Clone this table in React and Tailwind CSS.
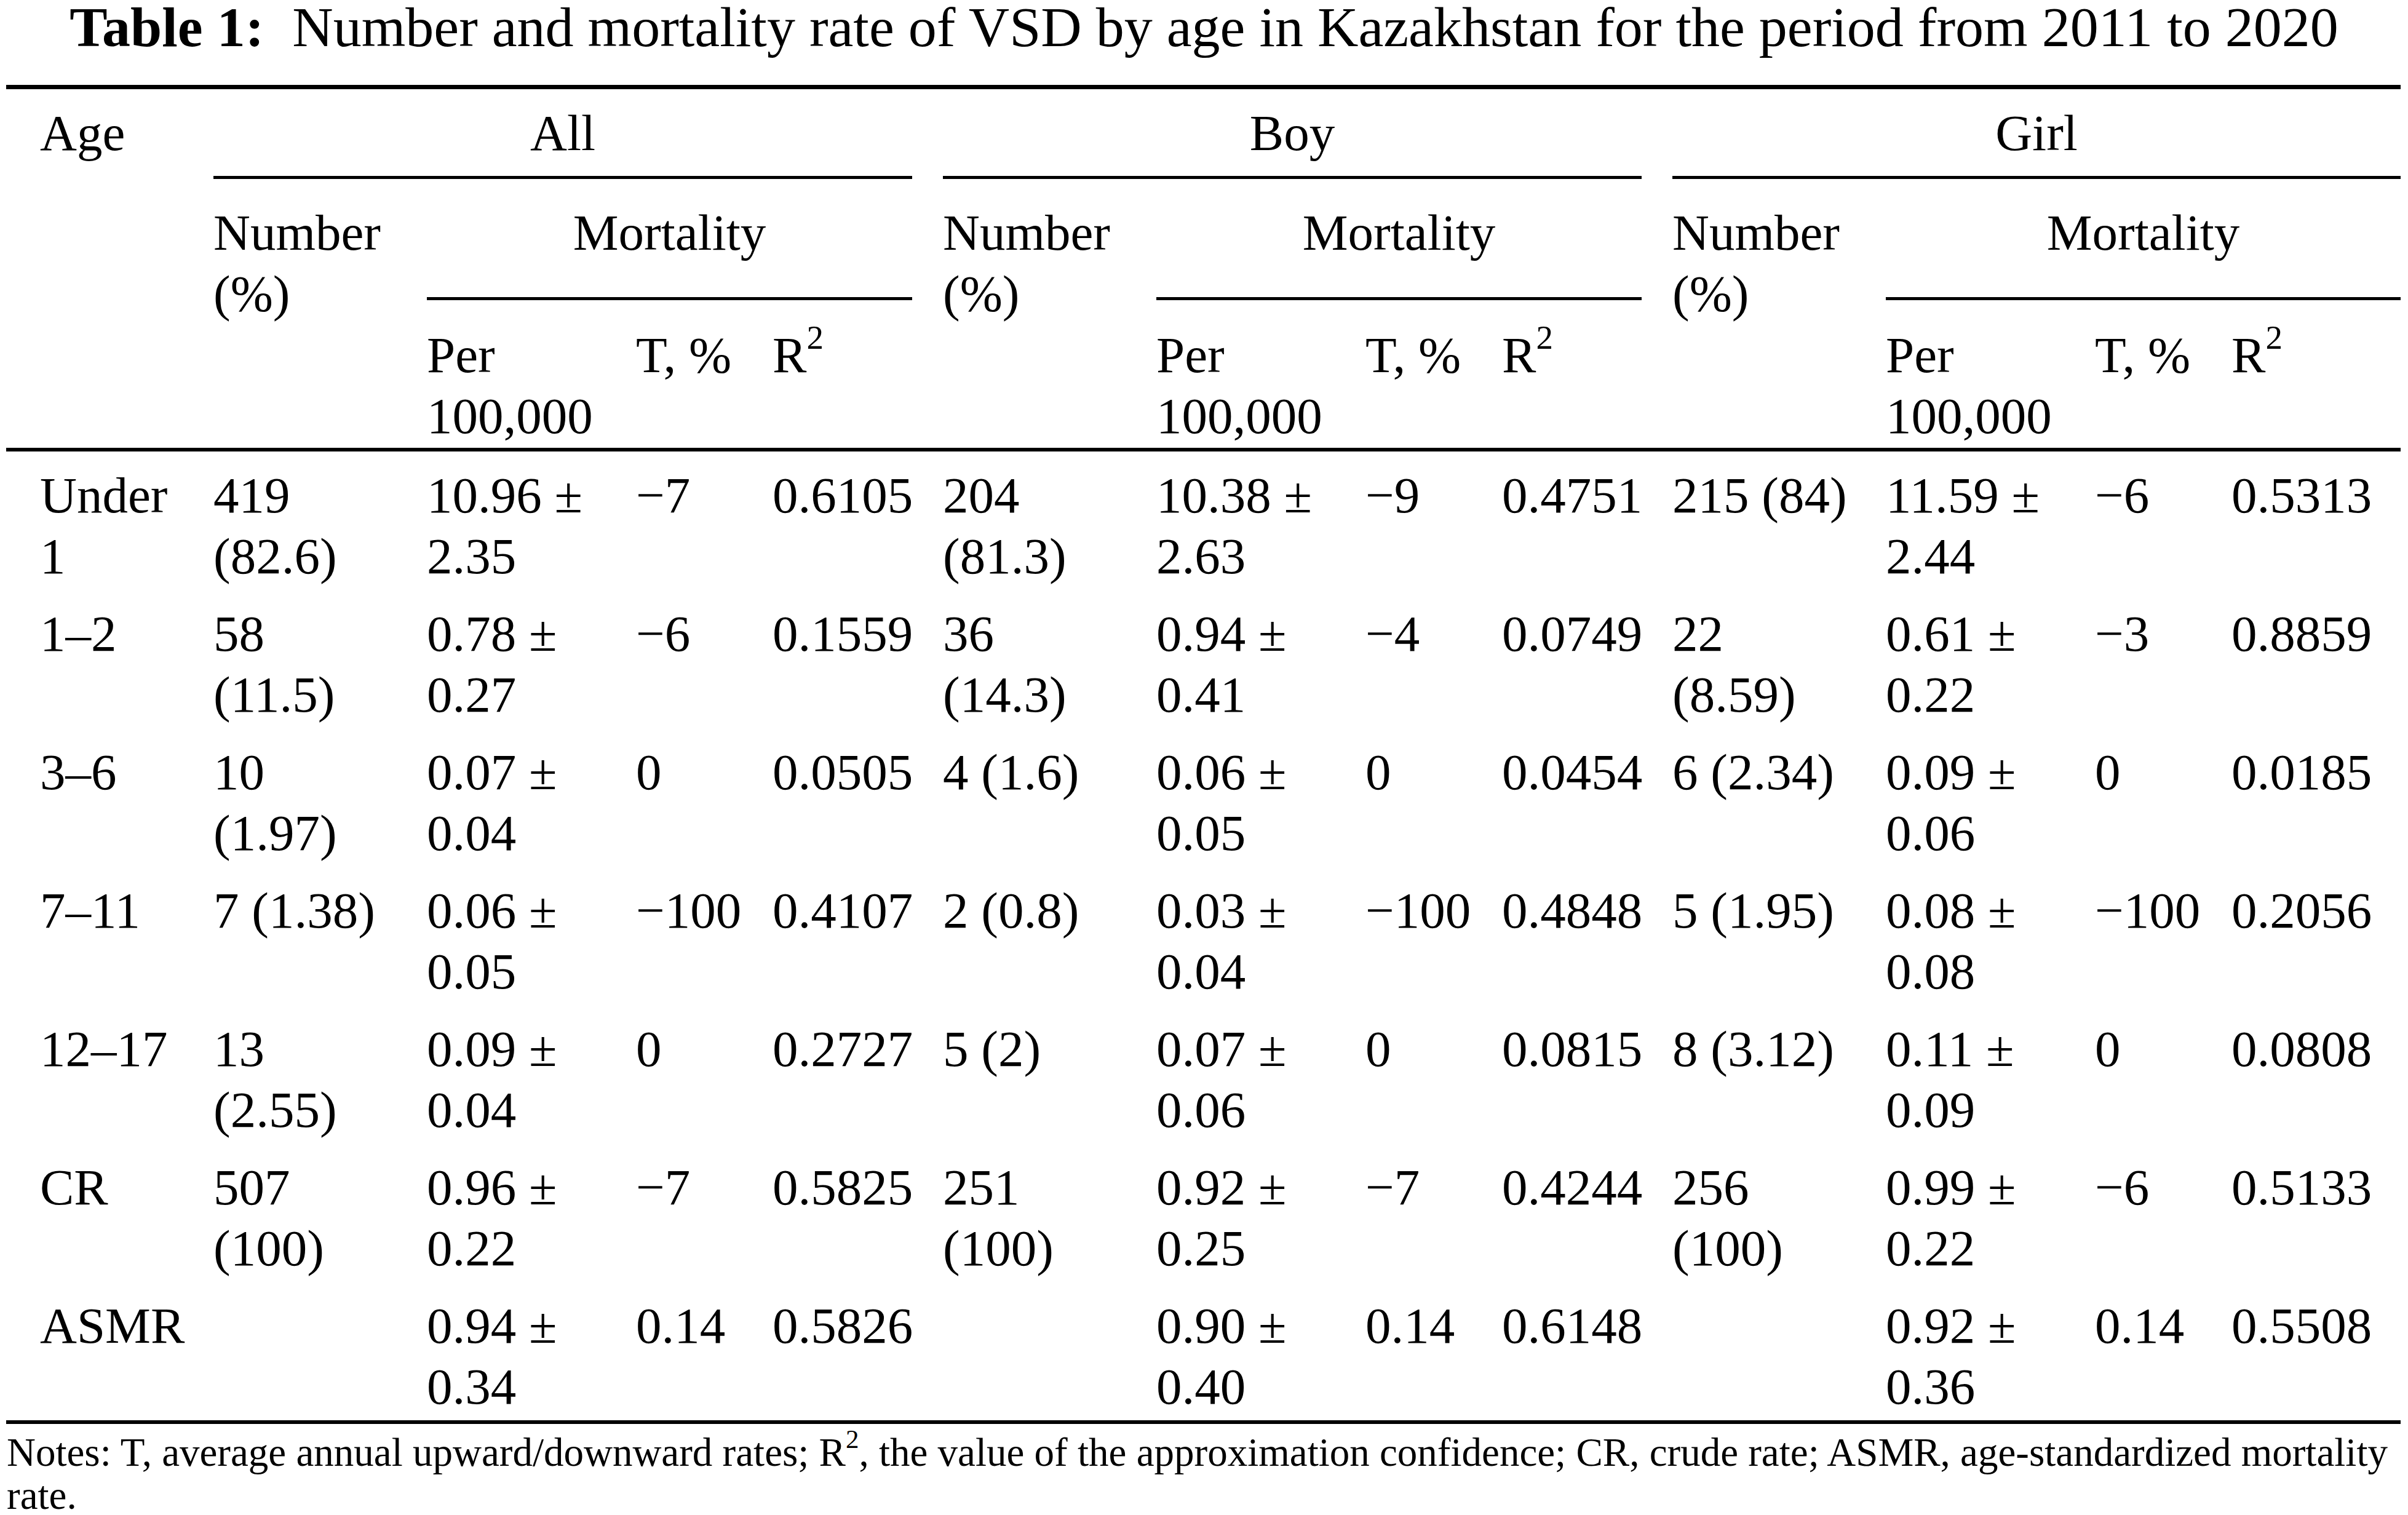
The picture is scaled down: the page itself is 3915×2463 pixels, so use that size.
import React from 'react';

const COLS =
  'grid grid-cols-[337px_347px_340px_222px_277px_347px_340px_222px_277px_347px_340px_222px_275px]';

const ROWS = [
  ['Under\n1', '419\n(82.6)', '10.96 ±\n2.35', '−7', '0.6105', '204\n(81.3)', '10.38 ±\n2.63', '−9', '0.4751', '215 (84)', '11.59 ±\n2.44', '−6', '0.5313'],
  ['1–2', '58\n(11.5)', '0.78 ±\n0.27', '−6', '0.1559', '36\n(14.3)', '0.94 ±\n0.41', '−4', '0.0749', '22\n(8.59)', '0.61 ±\n0.22', '−3', '0.8859'],
  ['3–6', '10\n(1.97)', '0.07 ±\n0.04', '0', '0.0505', '4 (1.6)', '0.06 ±\n0.05', '0', '0.0454', '6 (2.34)', '0.09 ±\n0.06', '0', '0.0185'],
  ['7–11', '7 (1.38)', '0.06 ±\n0.05', '−100', '0.4107', '2 (0.8)', '0.03 ±\n0.04', '−100', '0.4848', '5 (1.95)', '0.08 ±\n0.08', '−100', '0.2056'],
  ['12–17', '13\n(2.55)', '0.09 ±\n0.04', '0', '0.2727', '5 (2)', '0.07 ±\n0.06', '0', '0.0815', '8 (3.12)', '0.11 ±\n0.09', '0', '0.0808'],
  ['CR', '507\n(100)', '0.96 ±\n0.22', '−7', '0.5825', '251\n(100)', '0.92 ±\n0.25', '−7', '0.4244', '256\n(100)', '0.99 ±\n0.22', '−6', '0.5133'],
  ['ASMR', '', '0.94 ±\n0.34', '0.14', '0.5826', '', '0.90 ±\n0.40', '0.14', '0.6148', '', '0.92 ±\n0.36', '0.14', '0.5508'],
];

const GROUPS = ['All', 'Boy', 'Girl'];

const RSquared = () => (
  <span>
    R<span className="relative top-[-38px] text-[55px] leading-none">2</span>
  </span>
);

const App = () => {
  return (
    <div className="w-[3915px] min-h-[2463px] bg-white text-black font-['Liberation_Serif','Times_New_Roman',serif]">
      <div className="h-[138px] text-center text-[92px] leading-[88px] whitespace-nowrap">
        <span className="font-bold">Table 1:</span>
        {'\u2002'}Number and mortality rate of VSD by age in Kazakhstan for the period from 2011 to 2020
      </div>

      <div className="ml-[10px] w-[3893px] text-[83px] leading-[99px]">
        <div className="border-t-[7px] border-b-[6px] border-black">
          {/* header */}
          <div className={`${COLS} grid-rows-[146px_197px_240px]`}>
            <div className="row-span-3 pl-[55px] pt-[22px]">Age</div>
            {GROUPS.map((g, i) => (
              <div
                key={g}
                className={`col-span-4 pt-[22px] text-center border-b-[5px] border-black ${i < 2 ? 'mr-[50px]' : ''}`}
              >
                {g}
              </div>
            ))}
            {GROUPS.map((g, i) => (
              <React.Fragment key={g}>
                <div className="row-span-2 pt-[38px]">
                  Number
                  <br />
                  (%)
                </div>
                <div
                  className={`col-span-3 pt-[38px] text-center border-b-[5px] border-black ${i < 2 ? 'mr-[50px]' : ''}`}
                >
                  Mortality
                </div>
              </React.Fragment>
            ))}
            {GROUPS.map(g => (
              <React.Fragment key={g}>
                <div className="pt-[40px]">
                  Per
                  <br />
                  100,000
                </div>
                <div className="pt-[40px] whitespace-nowrap">T, %</div>
                <div className="pt-[40px]">
                  <RSquared />
                </div>
              </React.Fragment>
            ))}
          </div>
        </div>

        {/* body */}
        <div className="border-b-[6px] border-black -mt-[6px] pt-[6px]">
          {ROWS.map(row => (
            <div key={row[0]} className={`${COLS} h-[225px] pt-[22px]`}>
              {row.map((cell, j) => (
                <div key={j} className={`whitespace-pre ${j === 0 ? 'pl-[55px]' : ''}`}>
                  {cell}
                </div>
              ))}
            </div>
          ))}
        </div>

        <div className="pt-[11px] pl-[1px] text-[65px] leading-[70px]">
          <div className="whitespace-nowrap">
            Notes: T, average annual upward/downward rates; R
            <span className="relative top-[-29px] text-[43px] leading-none">2</span>, the value of the
            approximation confidence; CR, crude rate; ASMR, age-standardized mortality
          </div>
          <div>rate.</div>
        </div>
      </div>
    </div>
  );
};

export default App;
